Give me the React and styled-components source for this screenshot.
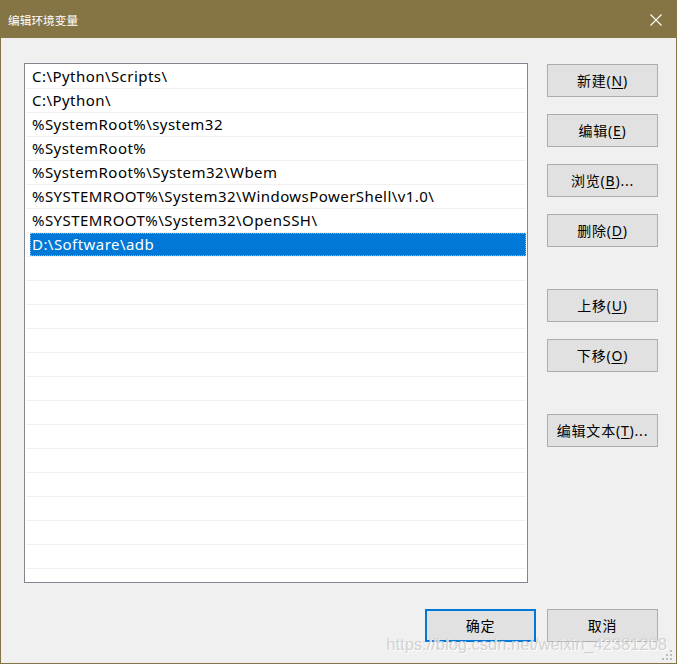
import React from "react";
import styled, { createGlobalStyle } from "styled-components";

const Global = createGlobalStyle`
  html, body { margin: 0; padding: 0; background: #f0f0f0; }
  * { box-sizing: border-box; }
`;

const Window = styled.div`
  position: relative;
  width: 677px;
  height: 664px;
  border: 1px solid #857545;
  background: #f0f0f0;
  display: flex;
  flex-direction: column;
  overflow: hidden;
  font-family: "Noto Sans", "Noto Sans CJK SC", sans-serif;
`;

const TitleBar = styled.div`
  height: 37px;
  flex: none;
  background: #857545;
  display: flex;
  align-items: center;
  justify-content: space-between;
  padding: 0 14px 0 7px;
`;

const Title = styled.span`
  color: #ffffff;
  font-family: "Noto Sans CJK SC", sans-serif;
  font-size: 11.7px;
  line-height: 1;
`;

const Close = styled.svg`
  width: 12px;
  height: 12px;
  display: block;
`;

const Body = styled.div`
  flex: 1;
  padding: 25px 0 0 23px;
  display: flex;
  flex-direction: column;
`;

const Main = styled.div`
  display: flex;
  gap: 19px;
`;

const ListBox = styled.div`
  width: 504px;
  height: 520px;
  border: 1px solid #828790;
  background: #ffffff;
  padding: 1px 0 0 0;
  overflow: hidden;
`;

const Row = styled.div`
  height: 24px;
  margin: 0 1px;
  border-bottom: 1px solid #f0f0f0;
  display: flex;
  align-items: center;
  font-size: 15px;
  letter-spacing: 0.45px;
  color: #000;
  white-space: nowrap;
`;

const RowText = styled.span`
  padding-left: 6px;
  line-height: 1;
`;

const EditBox = styled.div`
  height: 23px;
  margin-left: 4px;
  flex: 1;
  background: #0078d7;
  border: 1px dotted #7fb8e8;
  color: #fff;
  display: flex;
  align-items: center;
  padding-left: 1px;
  line-height: 1;
`;

const Side = styled.div`
  display: flex;
  flex-direction: column;
  padding-top: 1px;
`;

const Btn = styled.button`
  width: 111px;
  height: 33px;
  margin-top: ${(p) => p.$gap || 0}px;
  background: #e1e1e1;
  border: ${(p) => (p.$primary ? "2px solid #0078d7" : "1px solid #adadad")};
  font-family: "Noto Sans", "Noto Sans CJK SC", sans-serif;
  font-size: 14px;
  letter-spacing: 0.8px;
  color: #000;
  padding: 0;
  display: flex;
  align-items: center;
  justify-content: center;
  line-height: 1;
  cursor: default;
  u { text-decoration: underline; text-underline-offset: 2px; }
`;

const Footer = styled.div`
  display: flex;
  justify-content: flex-end;
  gap: 11px;
  padding-right: 18px;
  margin-top: 26px;
`;

const Watermark = styled.div`
  position: absolute;
  right: 9px;
  bottom: 9px;
  font-family: "Liberation Sans", sans-serif;
  font-size: 16.5px;
  color: #d2d2d2;
  text-shadow: 1px 1px 0 rgba(255, 255, 255, 0.9);
  white-space: nowrap;
  pointer-events: none;
`;

const Grip = styled.svg`
  position: absolute;
  right: 2px;
  bottom: 1px;
  width: 12px;
  height: 12px;
`;

const entries = [
  "C:\\Python\\Scripts\\",
  "C:\\Python\\",
  "%SystemRoot%\\system32",
  "%SystemRoot%",
  "%SystemRoot%\\System32\\Wbem",
  "%SYSTEMROOT%\\System32\\WindowsPowerShell\\v1.0\\",
  "%SYSTEMROOT%\\System32\\OpenSSH\\",
];

const sideButtons = [
  { label: "新建", key: "N", gap: 0 },
  { label: "编辑", key: "E", gap: 17 },
  { label: "浏览", key: "B", gap: 17, dots: true },
  { label: "删除", key: "D", gap: 17 },
  { label: "上移", key: "U", gap: 42 },
  { label: "下移", key: "O", gap: 17 },
  { label: "编辑文本", key: "T", gap: 42, dots: true },
];

export default function App() {
  const blanks = Array.from({ length: 14 });
  return (
    <>
      <Global />
      <Window>
        <TitleBar>
          <Title>编辑环境变量</Title>
          <Close viewBox="0 0 12 12">
            <path d="M0.5 0.5 L11.5 11.5 M11.5 0.5 L0.5 11.5" stroke="#fff" strokeWidth="1.1" fill="none" />
          </Close>
        </TitleBar>
        <Body>
          <Main>
            <ListBox>
              {entries.map((e) => (
                <Row key={e}>
                  <RowText>{e}</RowText>
                </Row>
              ))}
              <Row>
                <EditBox>D:\Software\adb</EditBox>
              </Row>
              {blanks.map((_, i) => (
                <Row key={i} />
              ))}
            </ListBox>
            <Side>
              {sideButtons.map((b) => (
                <Btn key={b.label} $gap={b.gap}>
                  {b.label}(<u>{b.key}</u>){b.dots ? "..." : ""}
                </Btn>
              ))}
            </Side>
          </Main>
          <Footer>
            <Btn $primary>确定</Btn>
            <Btn>取消</Btn>
          </Footer>
        </Body>
        <Watermark>https://blog.csdn.net/weixin_42381208</Watermark>
        <Grip viewBox="0 0 12 12">
          <g fill="#bcbcbc">
            <rect x="8" y="0" width="2" height="2" />
            <rect x="4" y="4" width="2" height="2" />
            <rect x="8" y="4" width="2" height="2" />
            <rect x="0" y="8" width="2" height="2" />
            <rect x="4" y="8" width="2" height="2" />
            <rect x="8" y="8" width="2" height="2" />
          </g>
        </Grip>
      </Window>
    </>
  );
}
